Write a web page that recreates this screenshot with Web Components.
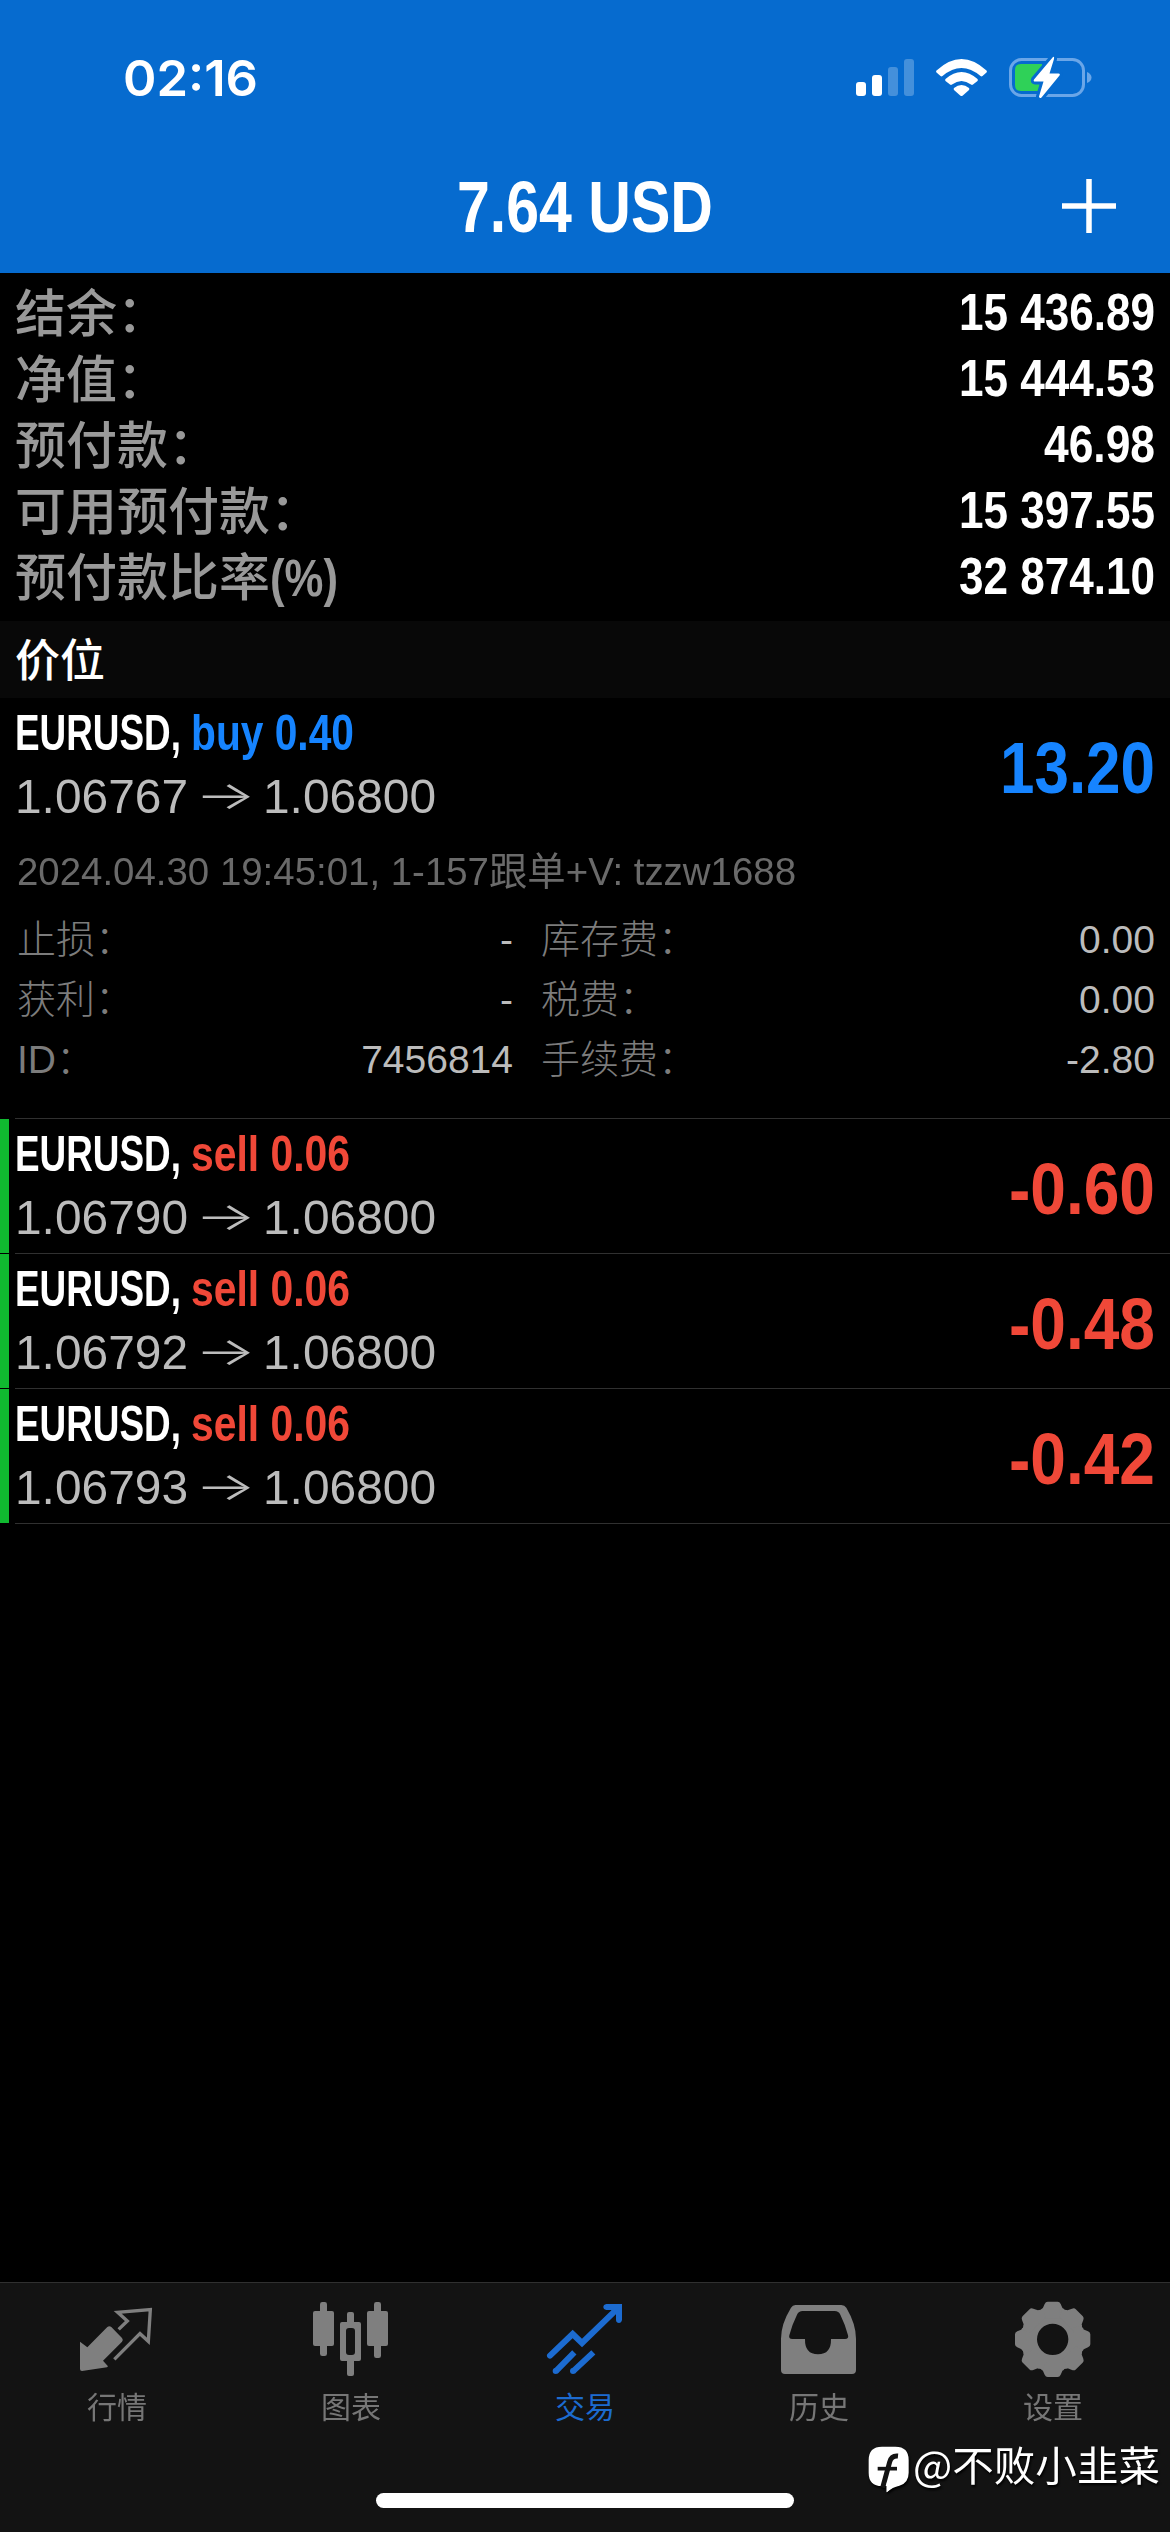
<!DOCTYPE html>
<html lang="zh-CN">
<head>
  <meta charset="utf-8">
  <title>交易</title>
  <style>
    html, body {
      margin: 0;
      background: #000;
    }

    body {
      width: 1170px;
      height: 2532px;
      overflow: hidden;
      font-family: "Liberation Sans", "Noto Sans CJK SC", sans-serif;
      color: #fff;
    }
  </style>
</head>
<body>
  <trade-screen></trade-screen>

  <script>
    // Small base so every component only has to return its template
    class BaseElement extends HTMLElement {
      constructor() {
        super();
        this.attachShadow({ mode: "open" });
      }

      connectedCallback() {
        this.shadowRoot.innerHTML = this.template();
      }

      attr(name) {
        return this.getAttribute(name) || "";
      }
    }

    class StatusBar extends BaseElement {
      template() {
        return `
          <style>
            :host {
              display: flex;
              align-items: center;
              justify-content: space-between;
              box-sizing: border-box;
              height: 156px;
              padding: 0 70px 0 123px;
            }
            .time {
              font: 600 50px/60px Inter, "Liberation Sans", sans-serif;
            }
            svg {
              display: block;
              margin-bottom: 2px;
            }
          </style>
          <fit-text class="time" width="135">${this.attr("time")}</fit-text>
          <svg width="250" height="54" viewBox="850 50 250 54">
            <g fill="#fff">
              <rect x="856" y="82" width="10" height="14" rx="3"/>
              <rect x="872" y="75" width="10" height="21" rx="3"/>
              <rect x="888" y="67" width="10" height="29" rx="3" opacity=".25"/>
              <rect x="904" y="59" width="10" height="37" rx="3" opacity=".25"/>
            </g>
            <g fill="#fff">
              <path d="M936.500 70.500 Q961.500 47.500 986.500 70.500 Q987.300 71.500 986.500 72.500 L982.500 76 Q981.500 76.800 980.500 76 Q961.500 60 942.500 76 Q941.500 76.800 940.500 76 L936.500 72.500 Q935.700 71.500 936.500 70.500Z"/>
              <path d="M945.500 79 Q961.500 65 977.500 79 Q978.300 80 977.500 81 L973 84.600 Q972 85.400 971 84.600 Q961.500 77.500 952 84.600 Q951 85.400 950 84.600 L945.500 81 Q944.700 80 945.500 79Z"/>
              <path d="M954 88 Q961.500 82 969 88 Q969.700 89 969 90 L962.500 95.700 Q961.500 96.500 960.500 95.700 L954 90 Q953.300 89 954 88Z"/>
            </g>
            <rect x="1010.500" y="59.500" width="73" height="36" rx="11" fill="none" stroke="#6aa6e8" stroke-width="3"/>
            <path d="M1087 72 Q1091.500 74 1091.500 77.500 Q1091.500 81 1087 83Z" fill="#6aa6e8"/>
            <path d="M1021 64 H1042 V91 H1021 Q1015 91 1015 85 V70 Q1015 64 1021 64Z" fill="#2fd158"/>
            <path d="M1053 57 L1034 79.500 Q1033 81.500 1035 81.500 L1043.500 81.500 L1039 96.500 Q1039.500 99 1041.500 97.500 L1059.500 75.500 Q1060.500 73.500 1058.500 73.500 L1049.500 73.500 L1054 59 Q1054.500 56 1053 57Z" fill="#fff" stroke="#066bcf" stroke-width="6" paint-order="stroke"/>
          </svg>
        `;
      }
    }

    class NavHeader extends BaseElement {
      template() {
        return `
          <style>
            :host {
              display: grid;
              grid-template-columns: 1fr auto 1fr;
              align-items: center;
              height: 102px;
              padding: 0 52px 15px 52px;
              font-size: 73px;
              font-weight: 700;
              line-height: 80px;
            }
            .title {
              grid-column: 2;
            }
            svg {
              display: block;
              justify-self: end;
            }
          </style>
          <fit-text class="title" width="256">${this.attr("title-text")}</fit-text>
          <svg width="58" height="58" viewBox="0 0 58 58">
            <path d="M2 28 H56 M29 1 V55" stroke="#fff" stroke-width="5.500"/>
          </svg>
        `;
      }
    }

    class AccountRow extends BaseElement {
      template() {
        return `
          <style>
            :host {
              display: flex;
              justify-content: space-between;
              height: 66px;
              line-height: 66px;
              font-size: 51px;
              padding: 0 15px;
            }
            .label {
              display: flex;
              color: #999;
              font-weight: 500;
              line-height: 69px;
            }
            .value, .unit {
              font-weight: 700;
            }
          </style>
          <span class="label"><slot></slot>${this.attr("unit") && `<fit-text class="unit" width="68">${this.attr("unit")}</fit-text>`}</span>
          <fit-text class="value" width="${this.attr("value-width")}">${this.attr("value")}</fit-text>
        `;
      }
    }

    class SectionTitle extends BaseElement {
      template() {
        return `
          <style>
            :host {
              display: block;
              background: #080808;
              padding: 0 15px;
              font-size: 45px;
              font-weight: 500;
              line-height: 81px;
              height: 77px;
            }
          </style>
          <slot></slot>
        `;
      }
    }

    class PositionItem extends BaseElement {
      template() {
        const buy = this.attr("side") === "buy";
        const color = buy ? "#1684ff" : "#f04838";

        return `
          <style>
            :host {
              display: block;
              --side: ${color};
            }
            .head {
              display: flex;
              justify-content: space-between;
              box-sizing: border-box;
              height: 134px;
              padding: 2px 15px 0;
              border-left: 0 solid #10b930;
            }
            :host([marked]) .head {
              border-left-width: 9px;
              padding-left: 6px;
            }
            .order {
              display: flex;
              gap: 10px;
              font-size: 50px;
              font-weight: 700;
              line-height: 66px;
            }
            .side {
              color: var(--side);
            }
            .prices {
              display: flex;
              color: #bcbcbc;
              font-size: 48px;
              line-height: 61px;
            }
            .arrow {
              width: 75px;
              text-align: center;
              font: 300 46px/58px Inter, "Liberation Sans", sans-serif;
              transform: translate(0, -1px) scale(1.4, .85);
            }
            .profit {
              color: var(--side);
              font-size: 73px;
              font-weight: 700;
              line-height: 135px;
            }
            .line {
              height: 1px;
              margin-left: 15px;
              background: #303030;
            }
          </style>
          <div class="head">
            <div>
              <div class="order">
                <fit-text width="166">${this.attr("symbol")},</fit-text>
                <fit-text class="side" width="${buy ? 163 : 159}">${this.attr("side")} ${this.attr("volume")}</fit-text>
              </div>
              <div class="prices">
                <fit-text width="173">${this.attr("open")}</fit-text>
                <span class="arrow">→</span>
                <fit-text width="173">${this.attr("current")}</fit-text>
              </div>
            </div>
            <fit-text class="profit" width="${buy ? 155 : 146}">${this.attr("profit")}</fit-text>
          </div>
          <slot></slot>
          <div class="line"></div>
        `;
      }
    }

    class PositionDetails extends BaseElement {
      template() {
        return `
          <style>
            :host {
              display: block;
              padding: 10px 15px 28px 17px;
              font-size: 39px;
              line-height: 60px;
            }
            .comment {
              color: #6a6a6a;
            }
            .grid {
              display: grid;
              grid-template-columns: 496px 1fr;
              column-gap: 28px;
              margin-top: 8px;
            }
          </style>
          <fit-text class="comment" width="779">${this.attr("comment")}</fit-text>
          <div class="grid"><slot></slot></div>
        `;
      }
    }

    class DetailCell extends BaseElement {
      template() {
        return `
          <style>
            :host {
              display: flex;
              justify-content: space-between;
            }
            .label {
              color: #7c7c7c;
              font-weight: 300;
            }
            .value {
              color: #bcbcbc;
            }
          </style>
          <span class="label"><slot></slot></span>
          <span class="value">${this.attr("value")}</span>
        `;
      }
    }

    const TAB_ICONS = {
      quotes: `
        <svg viewBox="234 90 234 234">
          <path d="M356 178 L382 153 L353 127 L451 119 L445 214 L420 191 L343 268" fill="none" stroke="currentColor" stroke-width="10"/>
          <path d="M322 171 Q328 166 334 171 L366 204 Q371 210 366 215 L309 272 L324 289 L321 292 L246 303 Q240 303 240 297 V215 L262 232Z" fill="currentColor"/>
        </svg>`,
      charts: `
        <svg viewBox="936 90 234 234" fill="currentColor">
          <rect x="939" y="123" width="63" height="105" rx="6"/>
          <rect x="960" y="96" width="21" height="162" rx="7"/>
          <path fill-rule="evenodd" d="M1026 156 H1077 Q1083 156 1083 162 V267 Q1083 273 1077 273 H1026 Q1020 273 1020 267 V162 Q1020 156 1026 156Z M1047 174 Q1038 174 1038 183 V246 Q1038 255 1047 255 H1056 Q1065 255 1065 246 V183 Q1065 174 1056 174Z"/>
          <path d="M1041 160 V132 Q1041 126 1047 126 H1056 Q1062 126 1062 132 V160Z M1041 270 V312 Q1041 318 1047 318 H1056 Q1062 318 1062 312 V270Z"/>
          <rect x="1101" y="123" width="63" height="105" rx="6"/>
          <rect x="1122" y="96" width="21" height="168" rx="7"/>
        </svg>`,
      trade: `
        <svg viewBox="438 90 234 234" fill="none" stroke="currentColor" stroke-width="18">
          <path d="M450 257 L518 192 L546 219 L650 118" stroke-linecap="round"/>
          <path d="M619 102 H666 V150 Q664 159 657 159 Q648 158 648 150 V133 L633 120 H619 Q610 118 610 111 Q610 104 619 102Z" fill="currentColor" stroke="none"/>
          <path d="M467 304 L523 247 M519 304 L580 247"/>
          <g fill="currentColor" stroke="none">
            <circle cx="467" cy="303" r="9"/>
            <circle cx="519" cy="303" r="9"/>
          </g>
        </svg>`,
      history: `
        <svg viewBox="90 90 234 234">
          <path fill="currentColor" fill-rule="evenodd" d="M136 105 H274 Q284 105 289 113 Q318 162 318 206 V300 Q318 312 306 312 H105 Q93 312 93 300 V206 Q93 162 123 113 Q128 105 136 105Z M158 123 Q146 123 141 134 Q127 162 118 196 Q115 207 127 207 H165 Q164 253 204 253 Q244 253 243 207 H285 Q297 207 294 196 Q285 162 271 134 Q266 123 254 123Z"/>
        </svg>`,
      settings: `
        <svg viewBox="792 90 234 234">
          <g transform="translate(908 208)" fill="currentColor">
            <circle r="69" fill="none" stroke="currentColor" stroke-width="44"/>
            ${[0, 45, 90, 135, 180, 225, 270, 315].map(a => `
              <path transform="rotate(${a})" d="M-15 -113 H15 Q21 -113 24 -106 L29 -95 Q33 -86 44 -88 L34 -62 H-34 L-44 -88 Q-33 -86 -29 -95 L-24 -106 Q-21 -113 -15 -113Z"/>
            `).join("")}
          </g>
        </svg>`
    };

    class TabItem extends BaseElement {
      template() {
        return `
          <style>
            :host {
              display: flex;
              flex-direction: column;
              align-items: center;
              flex: 1;
              color: #7f7f7f;
            }
            :host([active]) {
              color: #1c6bd0;
            }
            svg {
              display: block;
              width: 78px;
              height: 78px;
            }
            span {
              margin-top: 10px;
              font-size: 30px;
              line-height: 40px;
              opacity: .92;
            }
            :host([active]) span {
              opacity: 1;
            }
          </style>
          ${TAB_ICONS[this.attr("icon")]}
          <span><slot></slot></span>
        `;
      }
    }

    class TabBar extends BaseElement {
      template() {
        return `
          <style>
            :host {
              display: flex;
              flex-direction: column;
              box-sizing: border-box;
              height: 250px;
              border-top: 1px solid #303030;
              background: #131313;
            }
            .tabs {
              display: flex;
              padding-top: 17px;
            }
            .home {
              width: 418px;
              height: 15px;
              margin: auto auto 24px;
              border-radius: 8px;
              background: #fff;
            }
          </style>
          <div class="tabs"><slot></slot></div>
          <div class="home"></div>
        `;
      }
    }

    class AuthorMark extends BaseElement {
      template() {
        return `
          <style>
            :host {
              display: flex;
              align-items: flex-start;
              color: #fff;
              font-family: "Noto Sans CJK SC", sans-serif;
              font-size: 40.500px;
              line-height: 50px;
              filter: drop-shadow(1px 2px 1px #000);
            }
            svg {
              display: block;
              margin: 6px 2px 0 0;
            }
          </style>
          <svg width="44" height="50" viewBox="345 526 132 150">
            <path d="M390 531 H430 Q470 531 470 571 V609 Q470 640 442 648 Q422 652 404 668 V649 H390 Q350 649 350 609 V571 Q350 531 390 531Z" fill="#fff"/>
            <path d="M438 559 Q418 557 413 577 L392 654" fill="none" stroke="#131313" stroke-width="15"/>
            <path d="M377 597 H435" stroke="#131313" stroke-width="11"/>
            <path d="M404 640 V668 L420 654 L412 626Z" fill="#fff"/>
          </svg>
          <fit-text width="247"><slot></slot></fit-text>
        `;
      }
    }

    class TradeScreen extends BaseElement {
      template() {
        return `
          <style>
            :host {
              display: flex;
              flex-direction: column;
              position: relative;
              width: 1170px;
              height: 2532px;
              overflow: hidden;
            }
            header {
              height: 273px;
              background: #066bcf;
            }
            .account {
              padding: 7px 0 11px;
            }
            tab-bar {
              margin-top: auto;
            }
            author-mark {
              position: absolute;
              right: 10px;
              bottom: 37px;
            }
          </style>
          <header>
            <status-bar time="02:16"></status-bar>
            <nav-header title-text="7.64 USD"></nav-header>
          </header>
          <div class="account">
            <account-row value="15 436.89" value-width="196">结余：</account-row>
            <account-row value="15 444.53" value-width="196">净值：</account-row>
            <account-row value="46.98" value-width="111">预付款：</account-row>
            <account-row value="15 397.55" value-width="196">可用预付款：</account-row>
            <account-row value="32 874.10" value-width="196" unit="(%)">预付款比率</account-row>
          </div>
          <section-title>价位</section-title>
          <position-item symbol="EURUSD" side="buy" volume="0.40" open="1.06767" current="1.06800" profit="13.20">
            <position-details comment="2024.04.30 19:45:01, 1-157跟单+V: tzzw1688">
              <detail-cell value="-">止损：</detail-cell>
              <detail-cell value="0.00">库存费：</detail-cell>
              <detail-cell value="-">获利：</detail-cell>
              <detail-cell value="0.00">税费：</detail-cell>
              <detail-cell value="7456814">ID：</detail-cell>
              <detail-cell value="-2.80">手续费：</detail-cell>
            </position-details>
          </position-item>
          <position-item marked symbol="EURUSD" side="sell" volume="0.06" open="1.06790" current="1.06800" profit="-0.60"></position-item>
          <position-item marked symbol="EURUSD" side="sell" volume="0.06" open="1.06792" current="1.06800" profit="-0.48"></position-item>
          <position-item marked symbol="EURUSD" side="sell" volume="0.06" open="1.06793" current="1.06800" profit="-0.42"></position-item>
          <tab-bar>
            <tab-item icon="quotes">行情</tab-item>
            <tab-item icon="charts">图表</tab-item>
            <tab-item icon="trade" active>交易</tab-item>
            <tab-item icon="history">历史</tab-item>
            <tab-item icon="settings">设置</tab-item>
          </tab-bar>
          <author-mark>@不败小韭菜</author-mark>
        `;
      }
    }

    // Condenses its text horizontally to the given width
    class FitText extends HTMLElement {
      constructor() {
        super();
        this.attachShadow({ mode: "open" });
      }

      connectedCallback() {
        const width = Number(this.getAttribute("width"));
        this.shadowRoot.innerHTML = `
          <style>
            :host {
              display: block;
              width: ${width}px;
              white-space: nowrap;
            }
            span {
              display: inline-block;
              transform-origin: 0 50%;
            }
          </style>
          <span><slot></slot></span>
        `;
        const span = this.shadowRoot.querySelector("span");
        const natural = span.getBoundingClientRect().width;
        if (natural) {
          span.style.transform = `scaleX(${width / natural})`;
        }
      }
    }

    customElements.define("status-bar", StatusBar);
    customElements.define("nav-header", NavHeader);
    customElements.define("account-row", AccountRow);
    customElements.define("section-title", SectionTitle);
    customElements.define("position-item", PositionItem);
    customElements.define("position-details", PositionDetails);
    customElements.define("detail-cell", DetailCell);
    customElements.define("tab-item", TabItem);
    customElements.define("tab-bar", TabBar);
    customElements.define("author-mark", AuthorMark);
    customElements.define("trade-screen", TradeScreen);
    // Last, so the surrounding font sizes are already in place when it measures
    customElements.define("fit-text", FitText);
  </script>
</body>
</html>
